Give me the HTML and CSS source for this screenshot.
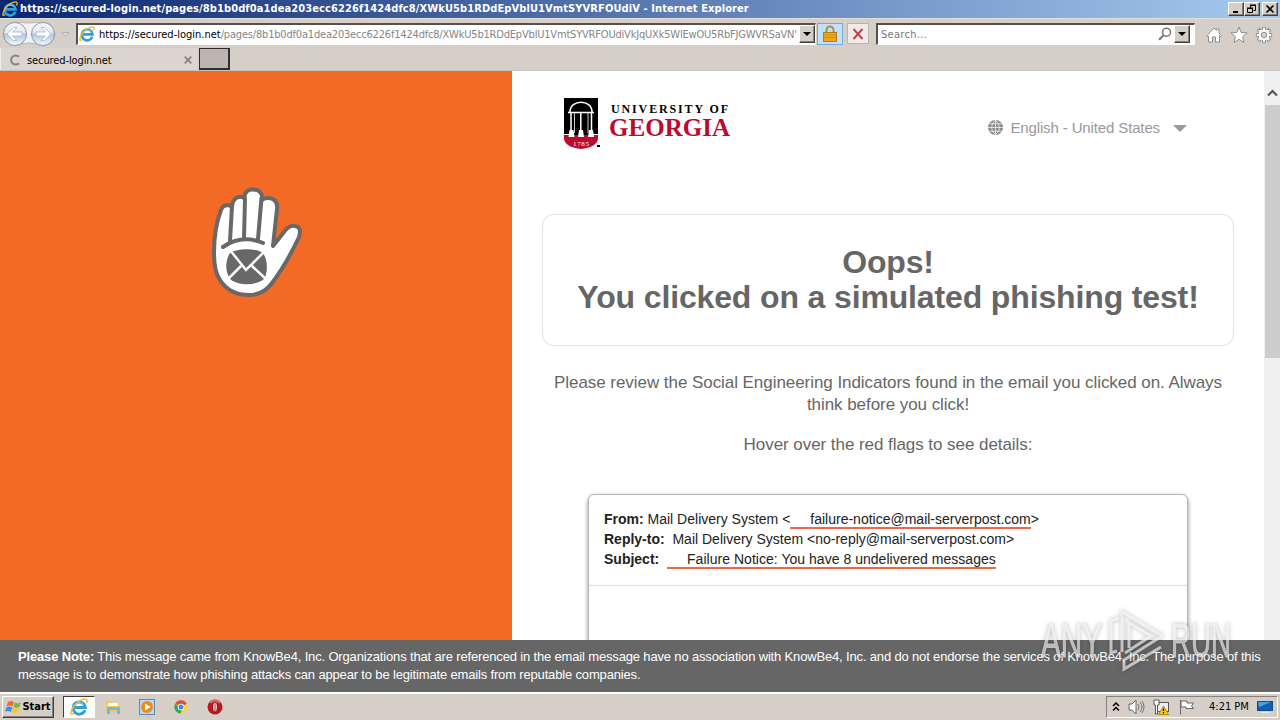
FILE: index.html
```html
<!DOCTYPE html>
<html lang="en">
<head>
  <meta charset="UTF-8">
  <meta name="viewport" content="width=device-width, initial-scale=1.0">
  <title>secured-login.net</title>
  <link rel="stylesheet" href="styles.css">
</head>
<body>
  <svg class="defs" width="0" height="0">
    <symbol id="ie" viewBox="0 0 16 16">
      <path d="M13.3 10.8A5.4 5.4 0 1 1 13.6 8.4H4.2" fill="none" stroke="#2f9fdf" stroke-width="2.6"/>
      <path d="M12.2 6.2A4.2 4.2 0 0 0 5 6" fill="none" stroke="#8fdcff" stroke-width=".8"/>
      <path d="M3.5 13.5C0 15.500 .5 13 1.500 11M1.500 11C3 6 10.5-.5 14.6 1.2c1 .6.7 2-.1 3.3" fill="none" stroke="#f0bb24" stroke-width="1.3"/>
    </symbol>
  </svg>

  <div class="titlebar">
    <svg class="ie-icon" width="16" height="16"><use href="#ie"/></svg>
    <span class="title">https://secured-login.net/pages/8b1b0df0a1dea203ecc6226f1424dfc8/XWkU5b1RDdEpVblU1VmtSYVRFOUdiV - Internet Explorer</span>
    <div class="win-buttons">
      <button><svg width="12" height="10"><path d="M3 8h5" stroke="#000" stroke-width="2"/></svg></button>
      <button><svg width="12" height="10"><path d="M4.500 4V1.500h5v5H7.500M4 1h6M1.500 4.500h5v4h-5zM1 4h6" fill="none" stroke="#000"/></svg></button>
      <button class="close"><svg width="12" height="10"><path d="M2.500 1.500l7 7m0-7l-7 7" stroke="#000" stroke-width="1.700"/></svg></button>
    </div>
  </div>

  <div class="navbar">
    <svg class="nav-arrows" width="74" height="28" viewBox="0 0 74 28">
      <defs>
        <linearGradient id="orb" x2="0" y2="1">
          <stop offset="0" stop-color="#f8fafd"/>
          <stop offset=".45" stop-color="#dfe7f0"/>
          <stop offset=".5" stop-color="#b3c6d9"/>
          <stop offset="1" stop-color="#eefaff"/>
        </linearGradient>
      </defs>
      <path d="M15 2Q29 4 43 2a12 12 0 0 1 0 24Q29 20 15 26a12 12 0 0 1 0-24z" fill="#f2f2f3" stroke="#b9b7b8"/>
      <circle cx="15" cy="14" r="11.500" fill="url(#orb)" stroke="#8c9bac"/>
      <circle cx="43" cy="14" r="11.500" fill="url(#orb)" stroke="#8c9bac"/>
      <path d="M7 14l6.500-6.500H17L12.500 12H22v4h-9.500l4.500 4.500h-3.500z" fill="#fff" stroke="#a3b6c9" stroke-width=".8"/>
      <path d="M51 14l-6.500-6.500H41l4.500 4.500H36v4h9.500L41 20.500h3.500z" fill="#fff" stroke="#a3b6c9" stroke-width=".8"/>
      <path d="M61.500 12.500h8l-4 4z" fill="#dedbd5" stroke="#b5b1aa"/>
    </svg>
    <div class="address">
      <svg width="16" height="16"><use href="#ie"/></svg>
      <span class="url"><span class="host">https://secured-login.net</span>/pages/8b1b0df0a1dea203ecc6226f1424dfc8/XWkU5b1RDdEpVblU1VmtSYVRFOUdiVkJqUXk5WlEwOU5RbFJGWVRSaVN'</span>
      <button class="drop"><svg width="8" height="4"><path d="M0 0h8L4 4z"/></svg></button>
    </div>
    <div class="lock">
      <svg width="14" height="18"><path d="M3.500 8V5a3.500 3.500 0 0 1 7 0v3" fill="none" stroke="#a68e57" stroke-width="2"/><rect x=".5" y="7.500" width="13" height="9" fill="#eaa91d" stroke="#b77c11"/><path d="M1 10h12M1 12.500h12" stroke="#d58b0d"/></svg>
    </div>
    <div class="stop">
      <svg width="12" height="12"><path d="M1.500 1l9 10m0-10l-9 10" stroke="#c34347" stroke-width="2"/></svg>
    </div>
    <div class="search">
      <span>Search...</span>
      <svg width="14" height="14"><circle cx="8.500" cy="5.200" r="4" fill="none" stroke="#777" stroke-width="1.500"/><path d="M5.600 8.200L1 12.800" stroke="#777" stroke-width="2"/></svg>
      <button class="drop"><svg width="8" height="4"><path d="M0 0h8L4 4z"/></svg></button>
    </div>
    <div class="tools">
      <svg width="18" height="18" viewBox="0 0 18 18"><path d="M2 9.500L9 2l2.500 2.500V3H14v4l2.500 2.500-1 1-1-1v6.500h-4v-5h-3v5h-4V10l-1 1z" fill="#fff" stroke="#8f8f8f"/></svg>
      <svg width="18" height="18" viewBox="0 0 18 18"><path d="M9 1l2.200 5.500 5.900.4-4.500 3.800 1.400 5.800L9 13.300l-5 3.200 1.400-5.800L.9 6.900l5.900-.4z" fill="#fff" stroke="#8f8f8f"/></svg>
      <svg width="18" height="18" viewBox="0 0 18 18">
        <path id="tooth" d="M7.500 4V1.300h3V4M7.500 14v2.700h3V14M4 7.500H1.300v3H4M14 7.500h2.700v3H14" fill="#fff" stroke="#8f8f8f"/>
        <use href="#tooth" transform="rotate(45 9 9)"/>
        <circle cx="9" cy="9" r="5.400" fill="#fff"/>
        <circle cx="9" cy="9" r="2.800" fill="#d5cfc8" stroke="#8f8f8f"/>
      </svg>
    </div>
  </div>

  <div class="tabs">
    <div class="tab">
      <svg width="12" height="12"><path d="M10 2.800A4.600 4.600 0 1 0 10 9.200" fill="none" stroke="#858585" stroke-width="2"/></svg>
      <span>secured-login.net</span>
      <svg class="tab-close" width="8" height="8"><path d="M.7.700l6.600 6.600m0-6.600L.7 7.300" stroke="#85817d" stroke-width="1.700"/></svg>
    </div>
    <div class="new-tab"></div>
  </div>

  <div class="viewport">
    <div class="side">
      <svg class="hand" width="94" height="112" viewBox="0 0 94 112">
        <path d="M22 21C21 17 13 17 11 23C6 36 4 52 4 66C4 78 5 86 10 93C17 104 28 108 39 108C50 108 57 103 62 96C72 83 81 67 89 50C91 43 90 40 85 39C80 38 77 41 74 45L63 59L67 22C68 15 64 11 58 11C55 11 53 12 52 13C53 6 49 2.500 43 2.500C37 2.500 35 5 34 11C29 8 22 11 22 21z" fill="#fff" stroke="#686868" stroke-width="4" stroke-linejoin="round"/>
        <path d="M22 19L20 54M35 11L34 51M51.500 11L48 52M13 60Q32 47 53 56" fill="none" stroke="#686868" stroke-width="4" stroke-linecap="round"/>
        <path d="M20 66C28 61 46 61 53 66C58 73 58 86 54 92C46 99 28 99 20 92C15 84 15 74 20 66z" fill="#686868"/>
        <path d="M20 63L36 83L56 63M17 93L31 79M57 93L42 79" fill="none" stroke="#fff" stroke-width="2.500"/>
      </svg>
    </div>
    <div class="main">
      <div class="header">
        <svg class="logo" width="170" height="54" viewBox="0 0 170 54">
          <path d="M1 0h34v38H1z"/>
          <path d="M1 37h34v3c0 7-8 10-17 11-9-1-17-4-17-11z" fill="#ba0c2f"/>
          <path d="M7 14C7 1 29 1 29 14M5 14.500h26M8 14v21M17.800 14v20M28.500 14v21" fill="none" stroke="#fff" stroke-width="1.500"/>
          <path d="M11.500 14v21M25 14v21" stroke="#fff" stroke-width=".8"/>
          <path d="M6.500 32h4l1 7h-6zM16 32h4l1 7h-6zM26 32h4l1 7h-6zM1 36h5v1H1zM30 36h5v1h-5z" fill="#fff"/>
          <text class="logo-year" x="10" y="47.500" textLength="16">1785</text>
          <path d="M34 47h3v2h-3z"/>
          <text class="logo-small" x="48" y="15" textLength="117">UNIVERSITY OF</text>
          <text class="logo-big" x="46" y="38" textLength="121" lengthAdjust="spacingAndGlyphs">GEORGIA</text>
        </svg>
        <div class="language">
          <svg width="15" height="15" viewBox="0 0 15 15"><circle cx="7.500" cy="7.500" r="7.500" fill="#8c8c8c"/><path d="M7.500 0v15M0 7.500h15M1.500 3.800h12M1.500 11.200h12M7.500.3c-5 4-5 10.400 0 14.400M7.500.3c5 4 5 10.400 0 14.400" stroke="#fff" stroke-width=".7" fill="none"/></svg>
          <span>English - United States</span>
          <svg class="caret" width="14" height="7"><path d="M0 0h14L7 7z" fill="#999"/></svg>
        </div>
      </div>
      <h1>Oops!<br>You clicked on a simulated phishing test!</h1>
      <div class="intro">
        <p>Please review the Social Engineering Indicators found in the email you clicked on. Always<br>think before you click!</p>
        <p>Hover over the red flags to see details:</p>
      </div>
      <div class="email">
        <div class="email-head">
          <div><b>From:</b> Mail Delivery System &lt;<span class="flag">failure-notice@mail-serverpost.com</span>&gt;</div>
          <div><b>Reply-to:</b>&nbsp; Mail Delivery System &lt;no-reply@mail-serverpost.com&gt;</div>
          <div><b>Subject:</b>&nbsp; <span class="flag subject">Failure Notice: You have 8 undelivered messages</span></div>
        </div>
      </div>
    </div>
    <div class="scrollbar">
      <svg width="11" height="8"><path d="M1 6.500l4.500-4.500L10 6.500" fill="none" stroke="#555" stroke-width="2.200"/></svg>
      <div class="thumb"></div>
    </div>
  </div>

  <div class="note">
    <div class="note-first"><b>Please Note:</b> This message came from KnowBe4, Inc. Organizations that are referenced in the email message have no association with KnowBe4, Inc. and do not endorse the services of KnowBe4, Inc. The purpose of this</div>
    <div>message is to demonstrate how phishing attacks can appear to be legitimate emails from reputable companies.</div>
  </div>

  <svg class="watermark" width="200" height="70" viewBox="0 0 200 70">
    <text x="4" y="52" textLength="61" lengthAdjust="spacingAndGlyphs">ANY</text>
    <text x="134" y="52" textLength="60" lengthAdjust="spacingAndGlyphs">RUN</text>
    <path d="M82 13l-8 3v32l6-2M85 47V7l40 24-38 24v9l37-22M92 43V18l22 13-26 17"/>
  </svg>

  <div class="taskbar">
    <button class="start">
      <svg width="17" height="16" viewBox="0 0 17 16"><path d="M3 3q3-2 6 0L7.500 7.500q-3-2-6 0z" fill="#ed6a35"/><path d="M10 3.200q3 2 6 0l-1.500 4.500q-3 2-6 0z" fill="#75b943"/><path d="M1.300 8.500q3-2 6 0L5.800 13q-3-2-6 0z" fill="#468fd4"/><path d="M8.200 8.800q3 2 6 0l-1.500 4.500q-3 2-6 0z" fill="#f5c532"/></svg>
      <span>Start</span>
    </button>
    <div class="task active"><svg width="18" height="18"><use href="#ie"/></svg></div>
    <div class="task"><svg width="16" height="16"><path d="M1 2h6l1 2h6v9H1z" fill="#eccb67"/><path d="M3 4h10v3H3z" fill="#fff8dc"/><path d="M2 8h13v7h-3v-4H5v4H2z" fill="#71bada"/></svg></div>
    <div class="task"><svg width="16" height="16"><rect x=".5" y=".5" width="15" height="15" fill="#b7d9f1" stroke="#598cb9"/><circle cx="8" cy="8" r="6" fill="#ef8919"/><path d="M6 4.500v7L11.500 8z" fill="#fff"/></svg></div>
    <div class="task"><svg width="14" height="14"><circle cx="7" cy="7" r="6.500" fill="#ffd23b"/><path d="M7 7L1.300 3.700A6.500 6.500 0 0 1 12.700 3.800z" fill="#df4c40"/><path d="M1.300 3.700A6.500 6.500 0 0 0 6.500 13.500L8 9z" fill="#30a653"/><circle cx="7" cy="7" r="3.300" fill="#fff"/><circle cx="7" cy="7" r="2.500" fill="#4688e8"/></svg></div>
    <div class="task"><svg width="16" height="16"><circle cx="8" cy="8" r="7.500" fill="#b91820"/><path d="M3 4a6 5 0 0 1 10 0" fill="none" stroke="#e36a67" stroke-width="2"/><ellipse cx="8" cy="8" rx="2.300" ry="5" fill="#fff" stroke="#741015"/><path d="M8 4v8" stroke="#ba1822"/></svg></div>
    <div class="tray">
      <svg width="8" height="10"><path d="M1 4l3-3 3 3M1 8.500l3-3 3 3" fill="none" stroke="#000" stroke-width="1.500"/></svg>
      <svg width="17" height="16"><path d="M1 5h3l4-4v14l-4-4H1z" fill="#fff" stroke="#666"/><path d="M10 5q2 3 0 6M12 3q4 5 0 10M14 2q4 6 0 12" fill="none" stroke="#777"/></svg>
      <svg width="17" height="16"><rect x="4.500" y="3.500" width="11" height="9" fill="#eee" stroke="#555"/><path d="M1 1h5v5H4.500v9h-2V6H1z" fill="#fff" stroke="#555"/><path d="M10.500 7l5 8.500h-10z" fill="#f7cf28" stroke="#b28b0c"/><path d="M10.500 9.500V12m0 1v1.300" stroke="#000" stroke-width="1.300"/></svg>
      <svg width="17" height="16"><path d="M2.500 1v14.500M3 2h6v2h6.500l-2 3 2 2.500H8V8H3z" fill="#fff" stroke="#666"/></svg>
      <span class="clock">4:21 PM</span>
      <svg width="16" height="14"><rect x=".5" y="1.500" width="15" height="9" fill="#1260b3" stroke="#164d8f"/><path d="M1 2h13L2 7z" fill="#48a2e3"/><path d="M4 12.500h9" stroke="#e0edf5"/></svg>
    </div>
  </div>
</body>
</html>
```
FILE: styles.css
```css
* {
  box-sizing: border-box;
}
body {
  margin: 0;
  width: 1280px;
  height: 720px;
  overflow: hidden;
  position: relative;
  display: flex;
  flex-direction: column;
  background: #d5cfc8;
  font-family: "Liberation Sans", Arial, sans-serif;
}
svg {
  display: block;
  flex-shrink: 0;
}
button {
  padding: 0;
  display: flex;
  align-items: center;
  justify-content: center;
  background: #d5cfc8;
  border: 1px solid;
  border-color: #fff #404040 #404040 #fff;
  box-shadow: inset -1px -1px #85817c;
}
.defs {
  position: absolute;
}

/* browser window */
.titlebar, .navbar, .tabs, .taskbar {
  flex-shrink: 0;
  display: flex;
  white-space: nowrap;
  font-family: "DejaVu Sans Condensed", "DejaVu Sans", sans-serif;
  font-size: 11px;
}
.titlebar {
  height: 18px;
  padding: 0 2px;
  align-items: center;
  background: linear-gradient(to right, #0b2670, #a6caf0);
  color: #fff;
}
.title {
  margin: -1px 0 0 2px;
  font-weight: bold;
  letter-spacing: 0.1px;
}
.win-buttons {
  display: flex;
  margin-left: auto;
}
.win-buttons button {
  width: 16px;
  height: 14px;
}
.win-buttons .close {
  margin-left: 2px;
}
.navbar {
  height: 30px;
  align-items: center;
  border-top: 1px solid #e3ded8;
}
.nav-arrows {
  margin-right: 2px;
}
.address, .search {
  height: 22px;
  display: flex;
  align-items: center;
  background: #fff;
  border: 1px solid #fff;
  border-top: 2px solid #555049;
  border-left: 2px solid #555049;
}
.address {
  width: 740px;
  padding-left: 1px;
}
.url {
  margin-left: 4px;
  letter-spacing: -0.19px;
  color: #858585;
}
.host {
  color: #000;
  letter-spacing: 0;
}
.drop {
  width: 16px;
  height: 18px;
  margin-left: auto;
}
.lock {
  width: 26px;
  height: 22px;
  margin-left: 1px;
  display: flex;
  align-items: center;
  justify-content: center;
  background: #c5dff8;
  border: 1px solid #71a8dd;
}
.stop {
  width: 22px;
  height: 21px;
  margin-left: 4px;
  display: flex;
  align-items: center;
  justify-content: center;
  background: #eeebea;
  border: 1px solid #b9b4b1;
}
.search {
  width: 319px;
  margin-left: 7px;
  padding: 0 4px 0 3px;
  color: #777;
}
.search span {
  letter-spacing: 0.3px;
}
.search svg {
  margin-left: auto;
}
.search .drop {
  margin-left: 2px;
}
.search .drop svg {
  margin: 0;
}
.tools {
  display: flex;
  gap: 7px;
  margin: 3px 0 0 10px;
}
.tabs {
  height: 23px;
  border-bottom: 1px solid #c8c1ba;
}
.tab {
  width: 198px;
  height: 22px;
  padding: 2px 6px 0 8px;
  display: flex;
  align-items: center;
  background: #dad5cf;
  border-left: 1px solid #eee;
}
.tab span {
  margin-left: 6px;
  letter-spacing: -0.1px;
}
.tab-close {
  margin-left: auto;
}
.new-tab {
  width: 31px;
  height: 22px;
  margin-left: 1px;
  background: #bbb6b1;
  border: 1px solid #302e2b;
  border-width: 1px 2px 2px 1px;
}

/* page */
.viewport {
  height: 569px;
  flex-shrink: 0;
  display: flex;
  overflow: hidden;
  background: #fff;
}
.side {
  width: 512px;
  padding: 116px 0 0 210px;
  background: #f26a25;
}
.main {
  width: 752px;
  padding: 27px 30px 0;
}
.header {
  display: flex;
  justify-content: space-between;
  height: 116px;
  padding: 0 47px 0 21px;
}
.logo-small {
  font: bold 12px "Liberation Serif", serif;
}
.logo-big {
  font: bold 26px "Liberation Serif", serif;
  fill: #ba0c2f;
}
.logo-year {
  font: 7px "Liberation Serif", serif;
  fill: #fff;
}
.language {
  display: flex;
  align-items: center;
  height: 59px;
  color: #999;
  font-size: 15px;
  letter-spacing: -0.13px;
}
.language span {
  margin: 0 13px 0 7px;
}
.caret {
  margin-top: 2px;
}
h1 {
  height: 132px;
  margin: 0;
  padding-top: 30px;
  border: 1px solid #e3e3e3;
  border-radius: 12px;
  color: #666;
  font-size: 32px;
  line-height: 35px;
  letter-spacing: -0.14px;
  text-align: center;
  white-space: nowrap;
}
.intro {
  padding-top: 26px;
  text-align: center;
  color: #666;
  font-size: 17px;
  line-height: 22px;
  letter-spacing: -0.055px;
  white-space: nowrap;
}
.intro p {
  margin: 0 0 18px;
}
.email {
  width: 600px;
  height: 300px;
  margin: 38px auto 0;
  background: #fff;
  border: 1px solid #b5b5b5;
  border-radius: 6px;
  box-shadow: 0 2px 4px #888;
}
.email-head {
  height: 91px;
  padding: 14px 15px;
  border-bottom: 1px solid #ddd;
  font-size: 14px;
  line-height: 20px;
  color: #222;
  white-space: nowrap;
}
.flag {
  padding-left: 20px;
  border-bottom: 2px solid #ed694c;
}
.subject {
  letter-spacing: 0.03px;
}
.scrollbar {
  width: 16px;
  padding: 18px 0 0 1px;
  background: #f0f0f0;
}
.scrollbar svg {
  margin-left: 2px;
}
.thumb {
  height: 253px;
  margin-top: 8px;
  background: #cdcdcd;
}
.note {
  height: 52px;
  flex-shrink: 0;
  padding: 8px 18px;
  background: #666;
  color: #fff;
  font-size: 13px;
  line-height: 18px;
  letter-spacing: -0.16px;
  white-space: nowrap;
}
.watermark {
  position: absolute;
  left: 1037px;
  top: 605px;
  filter: drop-shadow(0 0 2px rgba(0, 0, 0, 0.4));
}
.watermark text {
  font: 49px "Liberation Sans", sans-serif;
  fill: rgba(255, 255, 255, 0.6);
  stroke: rgba(235, 235, 235, 0.5);
  stroke-width: 1px;
}
.watermark path {
  fill: none;
  stroke: rgba(250, 250, 250, 0.65);
  stroke-width: 3px;
}

/* taskbar */
.taskbar {
  height: 28px;
  align-items: center;
  padding: 0 2px 1px;
  border-top: 2px solid #fff;
}
.start {
  width: 52px;
  height: 22px;
  margin-right: 9px;
  font: bold 11px "DejaVu Sans Condensed", sans-serif;
}
.task {
  width: 32px;
  height: 22px;
  margin-right: 2px;
  display: flex;
  align-items: center;
  justify-content: center;
}
.task.active {
  background: #fff;
  border: 1px solid;
  border-color: #404040 #fff #fff #404040;
}
.tray {
  width: 172px;
  height: 22px;
  margin-left: auto;
  padding: 0 1px 0 5px;
  display: flex;
  align-items: center;
  gap: 8px;
  border: 1px solid;
  border-color: #85817c #fff #fff #85817c;
}
.clock {
  margin-left: 6px;
}
```
